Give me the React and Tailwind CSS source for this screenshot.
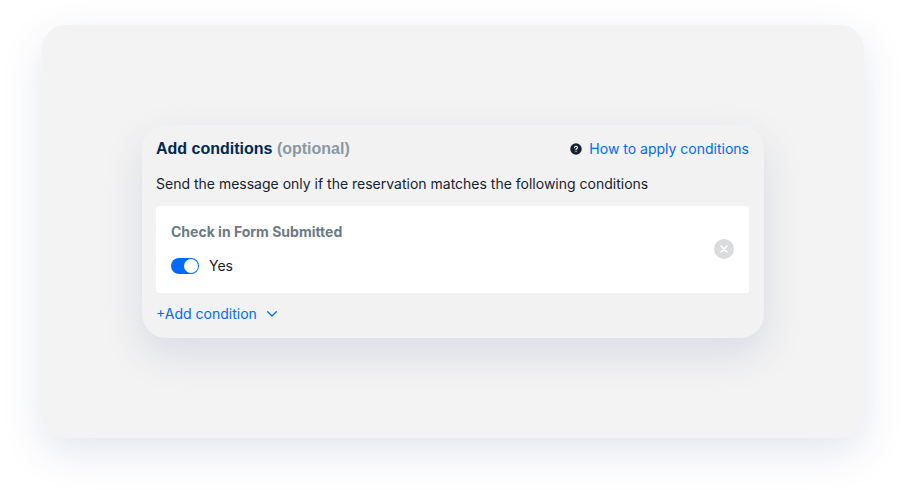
import React from 'react';

// Round question mark shown before the help link
const HelpIcon = () => (
  <svg width="12" height="12" viewBox="0 0 12 12" fill="none" aria-hidden="true">
    <circle cx="6" cy="6" r="5.75" fill="#16222e" />
    <path
      d="M4.5 4.7C4.5 3.8 5.1 3.2 6 3.2s1.5.55 1.5 1.35C7.5 5.5 6 5.6 6 6.8"
      stroke="#fff"
      strokeWidth="1.1"
      strokeLinecap="round"
    />
    <circle cx="6" cy="8.6" r="0.7" fill="#fff" />
  </svg>
);

const RemoveIcon = () => (
  <svg width="20" height="20" viewBox="0 0 20 20" fill="none" aria-hidden="true">
    <circle cx="10" cy="10" r="10" fill="#d9dbdd" />
    <path d="M7 7l6 6M13 7l-6 6" stroke="#fff" strokeWidth="1.6" strokeLinecap="round" />
  </svg>
);

const ChevronIcon = () => (
  <svg width="10" height="6" viewBox="0 0 10 6" fill="none" aria-hidden="true">
    <path d="M.7.7L5 5 9.3.7" stroke="#006aff" strokeWidth="1.3" strokeLinecap="round" strokeLinejoin="round" />
  </svg>
);

// Toggle Component
const Toggle = ({ id, label }) => (
  <div className="flex items-center gap-2.5">
    <input
      id={id}
      type="checkbox"
      role="switch"
      defaultChecked
      className="h-4 w-7 cursor-pointer appearance-none rounded-full bg-gray-300 p-px before:block before:size-3.5 before:rounded-full before:bg-white checked:bg-[#006aff] checked:before:ml-3"
    />
    <label htmlFor={id} className="cursor-pointer">
      {label}
    </label>
  </div>
);

// Condition Component
const Condition = ({ id, title, value }) => (
  <div className="flex items-center justify-between rounded-[3px] bg-white px-[15px] pt-4 pb-[17px]">
    <div>
      <h3 className="mb-3.5 font-bold text-[#6b7a85]">{title}</h3>
      <Toggle id={id} label={value} />
    </div>
    <button type="button" aria-label="Remove condition" className="cursor-pointer">
      <RemoveIcon />
    </button>
  </div>
);

export default function App() {
  return (
    <main className="bg-white px-[42px] pt-[25px] pb-[59px] font-['Inter',sans-serif] text-sm text-[#16222e]">
      <div className="rounded-3xl bg-[#f3f3f3] p-[100px] shadow-[0_14px_42px_rgba(50,60,120,0.13)]">
        <section className="rounded-3xl bg-[#f2f2f2] pt-3 pr-[15px] pb-[14px] pl-[14px] shadow-[0_16px_40px_rgba(50,60,120,0.13)]">
          <header className="flex items-center justify-between">
            <h2 className="font-['Liberation_Sans',sans-serif] text-base leading-6 font-bold text-[#00284f]">
              Add conditions <span className="text-[#8a98a3]">(optional)</span>
            </h2>
            <a href="#conditions-help" className="flex items-center gap-[7px] text-[#006aff]">
              <HelpIcon />
              How to apply conditions
            </a>
          </header>
          <p className="mt-[13px] mb-3">
            Send the message only if the reservation matches the following conditions
          </p>
          <Condition id="form-submitted" title="Check in Form Submitted" value="Yes" />
          <button type="button" className="mt-[11px] flex cursor-pointer items-center gap-2.5 text-[#006aff]">
            +Add condition
            <ChevronIcon />
          </button>
        </section>
      </div>
    </main>
  );
}
